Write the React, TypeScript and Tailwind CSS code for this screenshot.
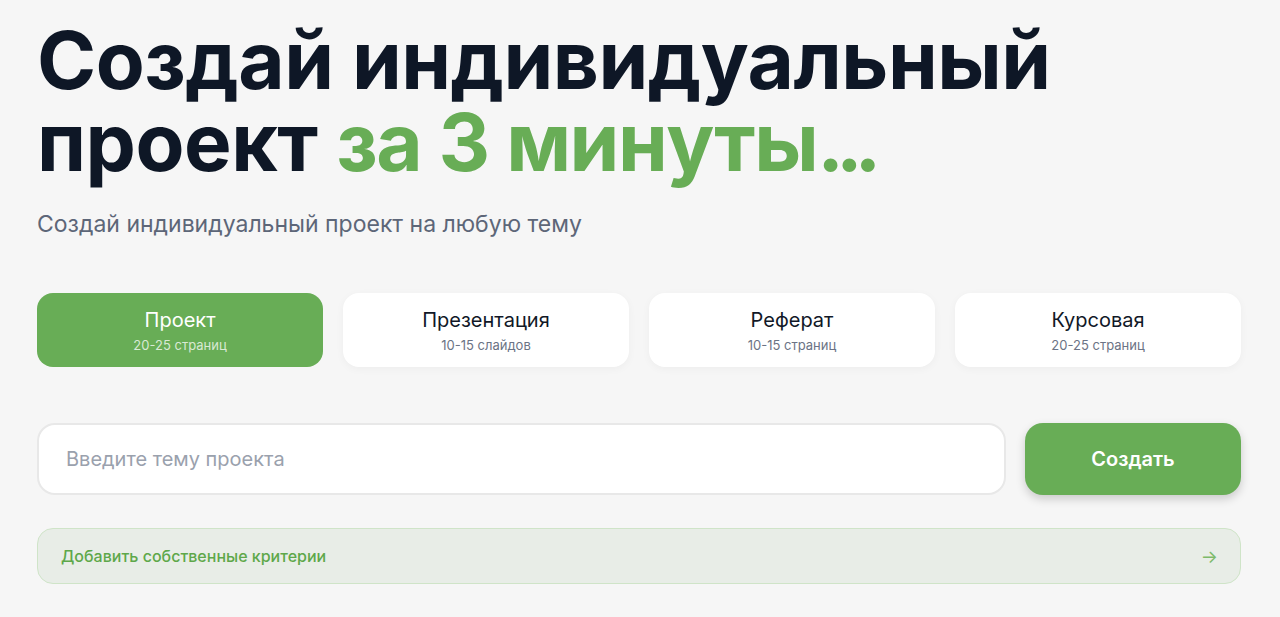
import { useState } from 'react';

type WorkType = {
  id: string;
  title: string;
  size: string;
};

const workTypes: WorkType[] = [
  { id: 'project', title: 'Проект', size: '20-25 страниц' },
  { id: 'slides', title: 'Презентация', size: '10-15 слайдов' },
  { id: 'essay', title: 'Реферат', size: '10-15 страниц' },
  { id: 'course', title: 'Курсовая', size: '20-25 страниц' }
];

export default function App() {
  const [active, setActive] = useState('project');
  const [topic, setTopic] = useState('');

  return (
    <div className="min-h-screen bg-[#f6f6f6] font-['Inter',_'Noto_Sans',sans-serif]">
      <section className="pl-[37px] pr-[39px] pt-[19px] pb-8">
        <h1 className="text-[80px] font-bold tracking-[-0.5px] text-[#0e1726]">
          <span className="block h-[82px] leading-[82px]">Создай индивидуальный</span>
          <span className="block h-[82px] leading-[82px]">
            проект{' '}
            <span className="tracking-[-1.5px] text-[#68ad56]">
              за 3 минуты<span className="tracking-[-8px]">...</span>
            </span>
          </span>
        </h1>
        <p className="mt-[26px] text-[23px] leading-[30px] text-[#5d6678]">
          Создай индивидуальный проект на любую тему
        </p>

        <div className="mt-[54px] grid grid-cols-4 gap-[20px]">
          {workTypes.map((item) => {
            const selected = item.id === active;
            return (
              <button
                className={`flex h-[74px] flex-col items-center justify-center rounded-[16px] ${
                  selected
                    ? 'bg-[#68ad56] text-white'
                    : 'bg-white text-[#111827] shadow-[0_2px_8px_rgba(0,0,0,0.04)]'
                }`}
                key={item.id}
                onClick={() => setActive(item.id)}
                type="button"
              >
                <span className="text-[20px] leading-[26px]">{item.title}</span>
                <span className={`mt-[4px] text-[13px] leading-[16px] ${selected ? 'text-white/75' : 'text-[#6b7385]'}`}>
                  {item.size}
                </span>
              </button>
            );
          })}
        </div>

        <form
          className="mt-[56px] flex gap-[19px]"
          onSubmit={(event) => event.preventDefault()}
        >
          <input
            className="h-[72px] flex-1 rounded-[18px] border-2 border-[#e8e8e8] bg-white px-[27px] text-[20px] text-[#111827] outline-none placeholder:text-[#9aa1ad]"
            onChange={(event) => setTopic(event.target.value)}
            placeholder="Введите тему проекта"
            value={topic}
          />
          <button
            className="h-[72px] w-[216px] rounded-[18px] bg-[#68ad56] text-[20px] font-semibold text-white shadow-[0_4px_10px_rgba(0,0,0,0.18)]"
            type="submit"
          >
            Создать
          </button>
        </form>

        <button
          className="mt-[33px] flex h-[56px] w-full items-center justify-between rounded-[16px] border border-[#cfe4c8] bg-[#e8ede7] pl-[23px] pr-[22px]"
          type="button"
        >
          <span className="text-[16px] font-medium text-[#5ea84a]">Добавить собственные критерии</span>
          <span className="text-[18px] text-[#7dba6a]">→</span>
        </button>
      </section>
    </div>
  );
}
